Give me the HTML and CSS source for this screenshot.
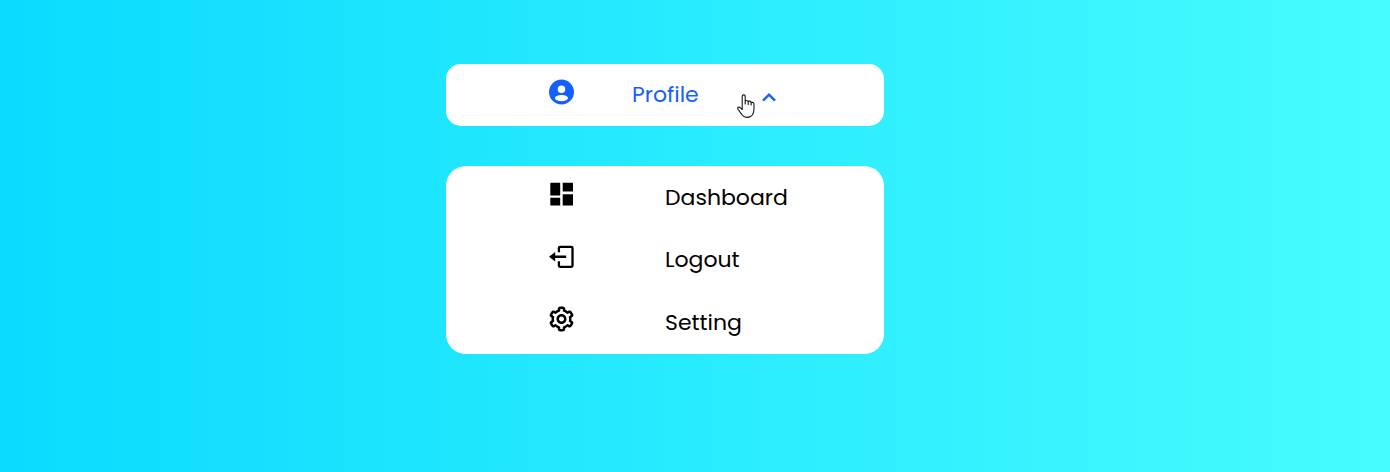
FILE: index.html
```html
<!DOCTYPE html>
<html lang="en">
<head>
<meta charset="utf-8">
<title>Profile menu</title>
<link rel="stylesheet" href="styles.css">
</head>
<body>
<main class="page">
  <button class="toggle">
    <svg class="icon" viewBox="-.4 0 24 24"><path fill-rule="evenodd" d="M12 2a10 10 0 1 0 0 20a10 10 0 1 0 0-20zM12 6.8a3 3 0 1 1 0 6a3 3 0 1 1 0-6zM12 14.3c2.9 0 5.2 1.1 5.2 2.5s-2.3 2.5-5.2 2.5s-5.2-1.1-5.2-2.5s2.3-2.5 5.2-2.5z"/></svg>
    <span class="label label-profile">Profile</span>
    <svg class="chevron" viewBox="0 0 14 9"><path d="M1 7.6 7 1.7l6 5.9"/></svg>
  </button>
  <svg class="pointer" viewBox="0 0 18 25"><path d="M5.2 15.5V2.5C5.2.3 8.2.3 8.2 2.5V10V7.6c0-1.5 3-1.5 3 0V10.5V8.1c0-1.5 2.9-1.2 2.9.3V11V9.2c0-1.3 2.9-1 2.9.6V15c0 5-2.6 8.4-7.2 8.4c-2.7 0-4.3-1.5-5.6-3.8L1 15.2c-1-1.8 1-2.8 2.2-1.5z"/></svg>
  <nav class="menu">
    <a class="item">
      <svg class="icon" viewBox="-.5 0 30 30"><path d="M4.3 3.8h8.9a.5.5 0 0 1 .5.5v12.2H3.8V4.3a.5.5 0 0 1 .5-.5zM16.2 3.8H26a.5.5 0 0 1 .5.5v8.2H16.2zM3.8 18.8h9.9v7.7H4.3a.5.5 0 0 1-.5-.5zM16.2 15.2h10.3V26a.5.5 0 0 1-.5.5h-9.8z"/></svg>
      <span class="label label-dashboard">Dashboard</span>
    </a>
    <a class="item">
      <svg class="icon" viewBox="-.5 -.8 30 30"><path d="M2.5 15 8.7 10.2v3.6h11v2.4h-11v3.6z"/><path class="door" d="M12.4 10.5V6.2a1.2 1.2 0 0 1 1.2-1.2h11.2A1.2 1.2 0 0 1 26 6.2v17.6a1.2 1.2 0 0 1-1.2 1.2H13.6a1.2 1.2 0 0 1-1.2-1.2v-4.3"/></svg>
      <span class="label label-logout">Logout</span>
    </a>
    <a class="item">
      <svg class="icon" viewBox="-.4 0 24 24"><path d="M12 16c2.206 0 4-1.794 4-4s-1.794-4-4-4-4 1.794-4 4 1.794 4 4 4zm0-6c1.084 0 2 .916 2 2s-.916 2-2 2-2-.916-2-2 .916-2 2-2z"/><path d="m2.845 16.136 1 1.73c.531.917 1.809 1.261 2.73.73l.529-.306A8.1 8.1 0 0 0 9 19.402V20c0 1.103.897 2 2 2h2c1.103 0 2-.897 2-2v-.598a8.132 8.132 0 0 0 1.896-1.111l.529.306c.923.53 2.198.188 2.731-.731l.999-1.729a2.001 2.001 0 0 0-.731-2.732l-.505-.292a7.718 7.718 0 0 0 0-2.224l.505-.292a2.002 2.002 0 0 0 .731-2.732l-.999-1.729c-.531-.92-1.808-1.265-2.731-.732l-.529.306A8.1 8.1 0 0 0 15 4.598V4c0-1.103-.897-2-2-2h-2c-1.103 0-2 .897-2 2v.598a8.132 8.132 0 0 0-1.896 1.111l-.529-.306c-.924-.531-2.2-.187-2.731.732l-.999 1.729a2.001 2.001 0 0 0 .731 2.732l.505.292a7.683 7.683 0 0 0 0 2.223l-.505.292a2.003 2.003 0 0 0-.731 2.733zm3.326-2.758A5.703 5.703 0 0 1 6 12c0-.462.058-.926.17-1.378a.999.999 0 0 0-.47-1.108l-1.123-.65.998-1.729 1.145.662a.997.997 0 0 0 1.188-.142 6.071 6.071 0 0 1 2.384-1.399A1 1 0 0 0 11 5.3V4h2v1.3a1 1 0 0 0 .708.956 6.083 6.083 0 0 1 2.384 1.399.999.999 0 0 0 1.188.142l1.144-.661 1 1.729-1.124.649a1 1 0 0 0-.47 1.108c.112.452.17.916.17 1.378 0 .461-.058.925-.171 1.378a1 1 0 0 0 .471 1.108l1.123.649-.998 1.729-1.145-.661a.996.996 0 0 0-1.188.142 6.071 6.071 0 0 1-2.384 1.399A1 1 0 0 0 13 18.7l.002 1.3H11v-1.3a1 1 0 0 0-.708-.956 6.083 6.083 0 0 1-2.384-1.399.992.992 0 0 0-1.188-.141l-1.144.662-1-1.729 1.124-.651a1 1 0 0 0 .471-1.108z"/></svg>
      <span class="label label-setting">Setting</span>
    </a>
  </nav>
</main>
</body>
</html>
```

FILE: styles.css
```css
* { box-sizing: border-box; }
body {
  margin: 0;
  height: 472px;
  overflow: hidden;
  background: linear-gradient(to right, #0adbff, #46fcff);
  font-family: Poppins, Inter, "Liberation Sans", sans-serif;
  font-size: 22px;
  font-weight: 400;
  color: #000;
}
.page {
  position: relative;
  display: flex;
  flex-direction: column;
  gap: 40px;
  width: 438px;
  margin-left: 446px;
  padding-top: 64px;
}
.toggle, .item {
  display: grid;
  align-items: start;
  padding: 12.5px 0 0 100px;
  font: inherit;
  text-align: left;
}
.toggle {
  grid-template-columns: 86px 130px 14px;
  height: 62px;
  border: 0;
  border-radius: 15px;
  background: #fff;
  color: #1460ff;
}
.menu {
  height: 188px;
  border-radius: 20px;
  background: #fff;
}
.item {
  grid-template-columns: 119px auto;
  height: 62.5px;
}
.icon {
  display: block;
  width: 30px;
  height: 30px;
  fill: currentColor;
}
.door {
  fill: none;
  stroke: currentColor;
  stroke-width: 2.3;
}
.label {
  line-height: 34px;
  padding-top: 2px;
  white-space: nowrap;
}
.label-profile {
  padding-top: 1px;
}
.chevron {
  width: 14px;
  height: 9px;
  margin-top: 16px;
  fill: none;
  stroke: currentColor;
  stroke-width: 2.4;
}
.pointer {
  position: absolute;
  left: 291px;
  top: 94px;
  width: 18px;
  height: 25px;
  fill: #fff;
  stroke: #111425;
  stroke-width: 1.1;
  stroke-linejoin: round;
}
```
